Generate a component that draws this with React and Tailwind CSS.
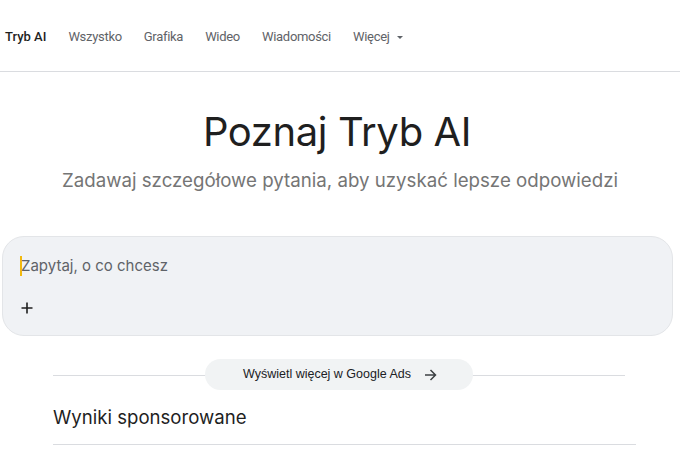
import React from "react";

export default function App() {
  return (
    <div className="w-[680px] h-[457px] bg-white overflow-hidden font-['Inter',Roboto,sans-serif]">
      <nav className="h-[72px] border-b border-[#dadce0] flex items-center pl-[5px] gap-[22px] text-[13px] tracking-[-0.3px] text-[#5f6368] pt-[3px] font-['Roboto',sans-serif]">
        <span className="text-[#1f1f1f] font-medium tracking-normal">Tryb AI</span>
        <span>Wszystko</span>
        <span>Grafika</span>
        <span>Wideo</span>
        <span>Wiadomości</span>
        <span className="flex items-center gap-[6px]">
          Więcej
          <svg width="8" height="5" viewBox="0 0 8 5"><path d="M1 1h6L4 4z" fill="#5f6368" /></svg>
        </span>
      </nav>
      <div className="flex flex-col items-center pt-[34px]">
        <h1 className="text-[40px] leading-[52px] text-[#1f1f1f] tracking-[-0.4px] pr-[6px]">Poznaj Tryb AI</h1>
        <p className="mt-[11px] text-[18.7px] leading-[24px] text-[#757575]">Zadawaj szczegółowe pytania, aby uzyskać lepsze odpowiedzi</p>
      </div>
      <div className="mt-[43px] ml-[2px] w-[671px] h-[100px] rounded-[22px] bg-[#f0f2f5] border border-[#e3e5e8] flex flex-col pl-[17px] pt-[19px]">
        <div className="flex items-center text-[15px] leading-[20px] text-[#5f6368]">
          <span className="w-[2px] h-[20px] bg-[#f2b90d] mr-[-1px]"></span>
          Zapytaj, o co chcesz
        </div>
        <div className="mt-[26px] ml-[1px]">
          <svg width="12" height="12" viewBox="0 0 12 12"><path d="M6 0.5v11M0.5 6h11" stroke="#1f1f1f" strokeWidth="1.6" /></svg>
        </div>
      </div>
      <div className="relative mt-[23px] mx-[53px] w-[572px] h-[31px] flex items-center">
        <div className="absolute left-0 right-0 top-[16px] border-t border-[#dadce0]"></div>
        <div className="relative ml-[152px] w-[268px] h-[31px] rounded-full bg-[#f1f3f4] flex items-center justify-center gap-[13px] text-[12.5px] text-[#202124] font-['Liberation_Sans',Arial,sans-serif] pl-[2px]">
          Wyświetl więcej w Google Ads
          <svg width="13" height="12" viewBox="0 0 13 12"><path d="M1 6h10.5M6.5 1l5 5-5 5" stroke="#3c4043" strokeWidth="1.5" fill="none" /></svg>
        </div>
      </div>
      <div className="mx-[53px] w-[583px] mt-[15px] pb-[15px] border-b border-[#dadce0] text-[18.6px] leading-[24px] text-[#1f1f1f]">
        Wyniki sponsorowane
      </div>
    </div>
  );
}
